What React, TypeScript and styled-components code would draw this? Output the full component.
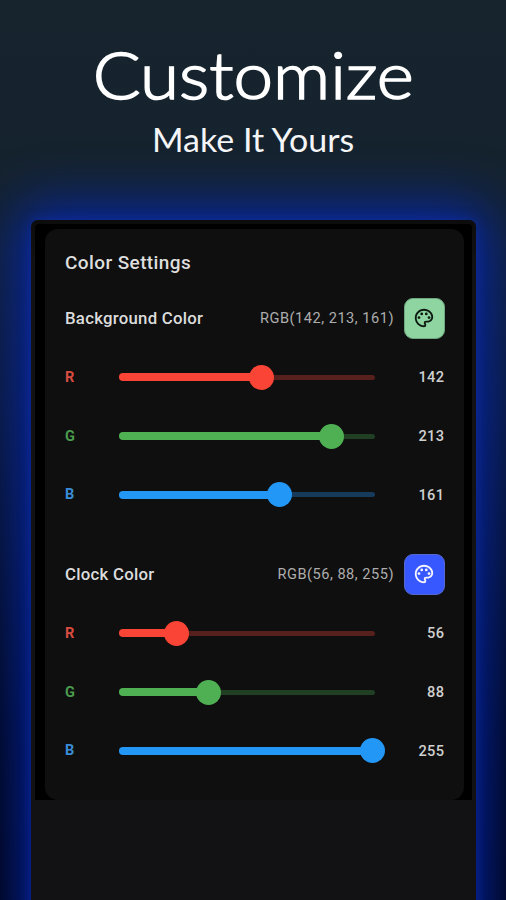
import React from "react";
import styled, { createGlobalStyle } from "styled-components";
import { MdOutlinePalette } from "react-icons/md";

const GlobalStyle = createGlobalStyle`
  * { box-sizing: border-box; }
  html, body { margin: 0; padding: 0; background: #000; }
`;

const Page = styled.main`
  width: 506px;
  height: 900px;
  overflow: hidden;
  display: flex;
  flex-direction: column;
  background: linear-gradient(180deg, #17242e 0px, #15232e 170px, #0c1830 400px, #00030f 750px, #000109 900px);
  font-family: Roboto, "Liberation Sans", sans-serif;
`;

const Hero = styled.header`
  height: 220px;
  flex: none;
  padding-top: 34px;
  display: flex;
  flex-direction: column;
  align-items: center;
  color: #fff;
  font-family: Lato, "Open Sans", sans-serif;
  white-space: nowrap;
`;

const Title = styled.h1`
  margin: 0;
  font-size: 66px;
  line-height: 80px;
  font-weight: 300;
  -webkit-text-stroke: 1.6px #fff;
  transform: scaleX(1.075);
`;

const Subtitle = styled.p`
  margin: 5px 0 0;
  font-size: 33px;
  line-height: 40px;
  transform: scaleX(1.03);
  color: #f4f5f6;
`;

const Phone = styled.section`
  width: 445px;
  height: 760px;
  flex: none;
  margin-left: 31px;
  padding: 4px 4px 0;
  border-radius: 7px;
  background: linear-gradient(180deg, #0c0c0d 0, #121214 40px);
  box-shadow: 0 0 12px 0 rgba(16, 48, 180, 0.55), 0 0 54px 14px rgba(6, 42, 185, 0.85);
`;

const Screen = styled.div`
  height: 576px;
  padding: 5px 8px 0 10px;
  border-radius: 4px 4px 0 0;
  background: #000;
`;

const Card = styled.div`
  height: 571px;
  padding: 18px 19px 0 20px;
  border-radius: 13px;
  background: #0f0f0f;
`;

const CardTitle = styled.h2`
  margin: 0 0 19px;
  font-size: 19px;
  line-height: 32px;
  font-weight: 500;
  letter-spacing: 0.4px;
  color: #dedede;
`;

const Group = styled.section<{ $gap?: number }>`
  margin-bottom: ${(p) => p.$gap ?? 0}px;
`;

const GroupHeader = styled.div`
  height: 41px;
  display: flex;
  align-items: center;
  margin-bottom: 9px;
`;

const GroupName = styled.h3`
  margin: 0;
  padding-bottom: 2px;
  flex: 1;
  font-size: 16.8px;
  font-weight: 500;
  letter-spacing: 0.25px;
  color: #dcdcdc;
`;

const ColorCode = styled.span`
  font-size: 14.6px;
  letter-spacing: 0.5px;
  margin-top: -2px;
  color: #adadad;
`;

const Swatch = styled.button<{ $color: string; $ink: string; $edge: string }>`
  width: 41px;
  height: 41px;
  margin-left: 10px;
  padding: 0 2px 2px 0;
  display: flex;
  align-items: center;
  justify-content: center;
  border: 1px solid ${(p) => p.$edge};
  border-radius: 9px;
  background: ${(p) => p.$color};
  color: ${(p) => p.$ink};
`;

const ChannelRow = styled.div`
  height: 58.7px;
  display: grid;
  grid-template-columns: 54px 256px 1fr;
  align-items: center;
`;

const ChannelName = styled.span<{ $color: string }>`
  font-size: 14.5px;
  font-weight: 700;
  color: ${(p) => p.$color};
`;

const ChannelValue = styled.span`
  text-align: right;
  font-size: 14.6px;
  font-weight: 500;
  letter-spacing: 0.35px;
  padding-right: 0.6px;
  color: #cfcfcf;
`;

const Track = styled.div<{ $color: string }>`
  position: relative;
  height: 5px;
  border-radius: 3px;
  background: ${(p) => p.$color};
`;

const Fill = styled.div<{ $color: string }>`
  position: absolute;
  left: 0;
  top: -1.5px;
  height: 8px;
  border-radius: 4px;
  background: ${(p) => p.$color};
`;

const Thumb = styled.div<{ $color: string }>`
  position: absolute;
  top: -10px;
  width: 25px;
  height: 25px;
  margin-left: -12.5px;
  border-radius: 50%;
  background: ${(p) => p.$color};
`;

const channels = [
  { name: "R", label: "#d94c40", color: "#fa4536", rail: "#56201c" },
  { name: "G", label: "#4a9a4d", color: "#4fb053", rail: "#213f22" },
  { name: "B", label: "#3a8cd6", color: "#2397f5", rail: "#153a5a" },
];

interface PickerProps {
  name: string;
  rgb: number[];
  ink: string;
  edge: string;
  gap?: number;
}

function ColorPicker({ name, rgb, ink, edge, gap }: PickerProps) {
  const code = rgb.join(", ");
  return (
    <Group $gap={gap}>
      <GroupHeader>
        <GroupName>{name}</GroupName>
        <ColorCode>{`RGB(${code})`}</ColorCode>
        <Swatch $color={`rgb(${code})`} $ink={ink} $edge={edge} aria-label={name}>
          <MdOutlinePalette size={22} />
        </Swatch>
      </GroupHeader>
      {channels.map((c, i) => {
        const x = 2.5 + (rgb[i] / 255) * 251;
        return (
          <ChannelRow key={c.name}>
            <ChannelName $color={c.label}>{c.name}</ChannelName>
            <Track $color={c.rail}>
              <Fill $color={c.color} style={{ width: x }} />
              <Thumb $color={c.color} style={{ left: x }} />
            </Track>
            <ChannelValue>{rgb[i]}</ChannelValue>
          </ChannelRow>
        );
      })}
    </Group>
  );
}

export default function App() {
  return (
    <Page>
      <GlobalStyle />
      <Hero>
        <Title>Customize</Title>
        <Subtitle>Make It Yours</Subtitle>
      </Hero>
      <Phone>
        <Screen>
          <Card>
            <CardTitle>Color Settings</CardTitle>
            <ColorPicker name="Background Color" rgb={[142, 213, 161]} ink="#0d1a11" edge="#6fa87e" gap={30} />
            <ColorPicker name="Clock Color" rgb={[56, 88, 255]} ink="#f2f4ff" edge="#5668cc" />
          </Card>
        </Screen>
      </Phone>
    </Page>
  );
}
